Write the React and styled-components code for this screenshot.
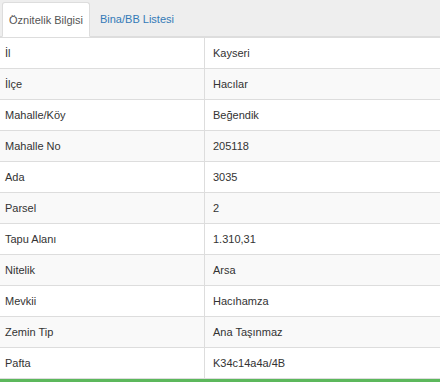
import React from 'react';
import styled, { createGlobalStyle } from 'styled-components';

const Global = createGlobalStyle`
  html, body {
    margin: 0;
    padding: 0;
    background: #fff;
    font-family: "Liberation Sans", Arial, sans-serif;
    font-size: 11px;
    color: #333;
  }
`;

const Panel = styled.div`
  width: 440px;
  height: 382px;
  overflow: hidden;
  display: flex;
  flex-direction: column;
`;

const TabBar = styled.div`
  display: flex;
  align-items: flex-end;
  gap: 2px;
  height: 37px;
  padding-left: 2px;
  background: #eee;
  border-bottom: 1px solid #ddd;
  box-sizing: border-box;
`;

const Tab = styled.div`
  height: ${p => (p.$active ? '35px' : '34px')};
  margin-bottom: ${p => (p.$active ? '-1px' : '0')};
  padding: 0 ${p => (p.$active ? '6px' : '7px')};
  display: flex;
  align-items: center;
  box-sizing: border-box;
  color: ${p => (p.$active ? '#555' : '#337ab7')};
  background: ${p => (p.$active ? '#fff' : 'transparent')};
  border: 1px solid ${p => (p.$active ? '#ddd' : 'transparent')};
  border-bottom-color: transparent;
  border-radius: 3px 3px 0 0;
  white-space: nowrap;
`;

const Table = styled.div`
  border-top: 1px solid #ddd;
  flex: 0 0 auto;
`;

const Row = styled.div`
  display: grid;
  grid-template-columns: 204px 1fr;
  height: 31px;
  box-sizing: border-box;
  border-bottom: 1px solid #ddd;
  background: ${p => (p.$striped ? '#f9f9f9' : '#fff')};
`;

const Cell = styled.div`
  display: flex;
  align-items: center;
  padding-left: ${p => (p.$value ? '8px' : '5px')};
  border-left: ${p => (p.$value ? '1px solid #ddd' : 'none')};
  white-space: nowrap;
`;

const Footer = styled.div`
  flex: 1;
  background: #5cb85c;
`;

const rows = [
  ['İl', 'Kayseri'],
  ['İlçe', 'Hacılar'],
  ['Mahalle/Köy', 'Beğendik'],
  ['Mahalle No', '205118'],
  ['Ada', '3035'],
  ['Parsel', '2'],
  ['Tapu Alanı', '1.310,31'],
  ['Nitelik', 'Arsa'],
  ['Mevkii', 'Hacıhamza'],
  ['Zemin Tip', 'Ana Taşınmaz'],
  ['Pafta', 'K34c14a4a/4B'],
];

export default function App() {
  return (
    <>
      <Global />
      <Panel>
        <TabBar>
          <Tab $active>Öznitelik Bilgisi</Tab>
          <Tab>Bina/BB Listesi</Tab>
        </TabBar>
        <Table>
          {rows.map(([label, value], i) => (
            <Row key={label} $striped={i % 2 === 1}>
              <Cell>{label}</Cell>
              <Cell $value>{value}</Cell>
            </Row>
          ))}
        </Table>
        <Footer />
      </Panel>
    </>
  );
}
